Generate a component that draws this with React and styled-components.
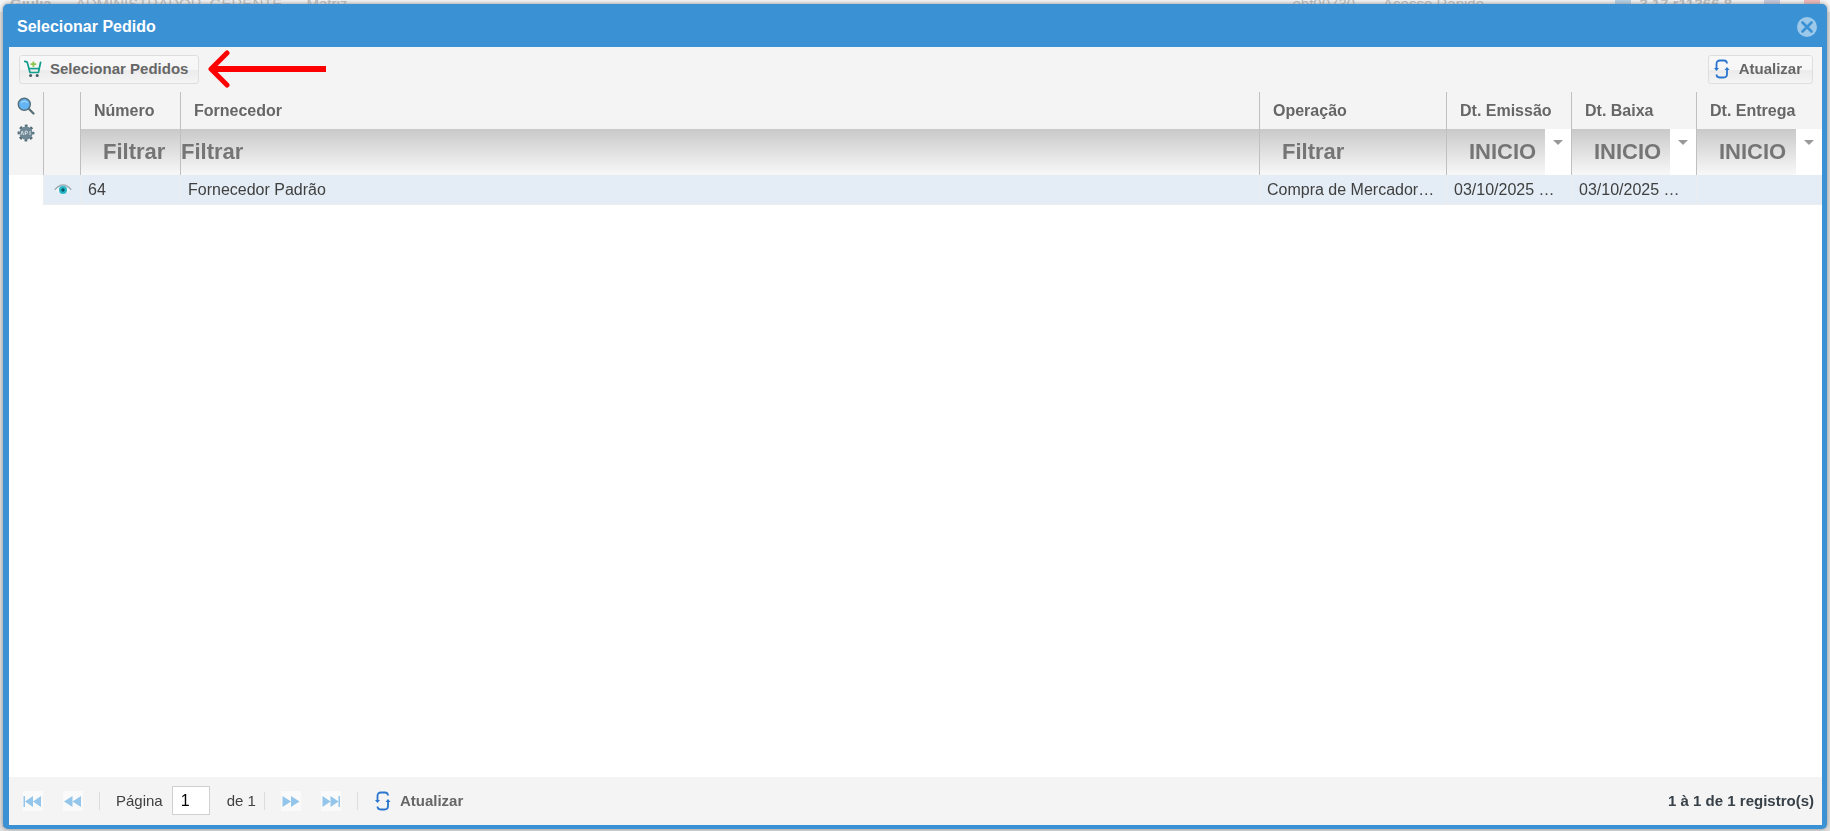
import React from "react";
import styled, {createGlobalStyle, css} from "styled-components";

const columns = [
    {id: "numero", label: "Número", width: 100, filter: "text"},
    {id: "fornecedor", label: "Fornecedor", filter: "text", flush: true},
    {id: "operacao", label: "Operação", width: 187, filter: "text"},
    {id: "emissao", label: "Dt. Emissão", width: 125, filter: "date"},
    {id: "baixa", label: "Dt. Baixa", width: 125, filter: "date"},
    {id: "entrega", label: "Dt. Entrega", width: 126, filter: "date"},
];

const orders = [
    {
        numero: "64",
        fornecedor: "Fornecedor Padrão",
        operacao: "Compra de Mercadorias",
        emissao: "03/10/2025 10:25",
        baixa: "03/10/2025 10:25",
        entrega: "",
    },
];

const CartIcon = () => (
    <svg width="18" height="18" viewBox="0 0 18 18" fill="none" aria-hidden="true">
        <path d="M0.8 1.4l2.4 0.7 2.8 10.4h8.4l2.2-10.2" stroke="#0f9d8c" strokeWidth="1.7" strokeLinecap="round" strokeLinejoin="round"/>
        <path d="M5 8.600h10" stroke="#0f9d8c" strokeWidth="1.6"/>
        <path d="M9.400 1.400v5.600M6.600 4.200h5.600" stroke="#8bc34a" strokeWidth="1.7"/>
        <circle cx="6.6" cy="15.4" r="1.5" fill="#455a64"/>
        <circle cx="13.2" cy="15.4" r="1.5" fill="#455a64"/>
    </svg>
);

const RefreshIcon = () => (
    <svg width="18" height="20" viewBox="-1 0 18 20" fill="none" aria-hidden="true">
        <path d="M2.500 9.500V5q0-3.500 3.500-3.500h4q2.800 0 3 3M13 10.500V15q0 3.500-3.500 3.500h-4q-2.800 0-3-3" stroke="#2a76cf" strokeWidth="1.800"/>
        <path d="M0 9h5l-2.500 3zM10.500 11h5L13 8z" fill="#2a76cf"/>
    </svg>
);

const SearchIcon = () => (
    <svg width="18" height="18" viewBox="0 0 18 18" aria-hidden="true">
        <path d="M12 12l4.500 4.500" stroke="#546e7a" strokeWidth="2.200" strokeLinecap="round"/>
        <circle cx="7.300" cy="7.300" r="6" fill="#64b5f6" stroke="#546e7a" strokeWidth="1.400"/>
        <path d="M4 5.600q3-3 6.500 0" stroke="#bbdefb" strokeWidth="1" fill="none"/>
    </svg>
);

const GearIcon = () => (
    <svg width="18" height="18" viewBox="0 0 18 18" aria-hidden="true">
        <circle cx="9" cy="9" r="6.600" fill="#6d8794"/>
        <circle cx="9" cy="9" r="7.300" fill="none" stroke="#546e7a" strokeWidth="2.200" strokeDasharray="2.800 2.933" strokeDashoffset="1.400"/>
        <path d="M3.800 11l1.400-4 1.400 4M8.200 11V7.200h1.200q1.200 0 1.200 1.100t-1.200 1.100H8.200M13 7v4" fill="none" stroke="#dfe6e9" strokeWidth="0.900"/>
    </svg>
);

const EyeIcon = () => (
    <svg width="18" height="14" viewBox="0 0 18 14" aria-hidden="true">
        <path d="M1 7q8-7 16 0-8 7-16 0" fill="#f3f7f9"/>
        <path d="M0.800 6.800q8.200-9.600 16.400 0" fill="none" stroke="#9eaeb6" strokeWidth="1.500"/>
        <circle cx="9" cy="7" r="4" fill="#26b6c6"/>
        <circle cx="9" cy="7" r="1.700" fill="#0b5566"/>
    </svg>
);

const CloseIcon = () => (
    <svg width="20" height="20" viewBox="0 0 20 20" aria-hidden="true">
        <circle cx="10" cy="10" r="10" fill="#9cc8e9"/>
        <path d="M5.500 5.500l9 9M14.500 5.500l-9 9" stroke="#3a91d4" strokeWidth="2.600" strokeLinecap="round"/>
    </svg>
);

const pagerShapes = {
    first: "M0.500 5h1.500v11H0.500zM10 5v11l-8-5.500zM18 5v11l-8-5.500z",
    prev: "M9.500 5v11l-8.500-5.500zM18 5v11l-8.500-5.500z",
    next: "M1.500 5v11l8.500-5.500zM10 5v11l8.500-5.500z",
    last: "M1.500 5v11l8-5.500zM9.500 5v11l8-5.500zM17.500 5H19v11h-1.500z",
};

const PagerIcon = ({shape}) => (
    <svg width="20" height="20" viewBox="0 0 20 20" aria-hidden="true">
        <path d={pagerShapes[shape]} fill="#93c6ea"/>
    </svg>
);

const PointerArrow = () => (
    <svg width="118" height="38" viewBox="0 0 118 38" fill="none" aria-hidden="true">
        <path d="M19 3L3 19l16 16" stroke="#f00" strokeWidth="5" strokeLinecap="round" strokeLinejoin="round"/>
        <path d="M3 19h115" stroke="#f00" strokeWidth="6"/>
    </svg>
);

const Filter = ({column}) => {
    if (column.filter === "date") {
        return (
            <FilterRow>
                <FilterInput placeholder="INICIO" aria-label={column.label}/>
                <DateButton type="button" aria-label={`Opções de ${column.label}`}>
                    <svg width="10" height="5" viewBox="0 0 10 5" aria-hidden="true">
                        <path d="M0 0h10L5 5z" fill="#999"/>
                    </svg>
                </DateButton>
            </FilterRow>
        );
    }
    return (
        <FilterRow>
            <FilterInput $flush={column.flush} placeholder="Filtrar" aria-label={column.label}/>
        </FilterRow>
    );
};

const App = () => {
    return (
        <>
            <GlobalStyle/>
            <Page>
                <PageBar>
                    <PageUser><b>Giulia</b><span>ADMINISTRADOR_GERENTE</span><span>Matriz</span></PageUser>
                    <PageInfo><span>ebf00730</span><span>Acesso Rápido</span></PageInfo>
                    <PageTools>
                        <Chip $color="#b5d3ea"/>
                        <Version>3.17.r11366.8</Version>
                        <Chip $color="#c9cbe0"/>
                        <Chip $color="#f3b9b9"/>
                    </PageTools>
                </PageBar>
                <PageFooter><b>Atualizar</b><span>Mostrar</span><span>100</span></PageFooter>
            </Page>
            <Dialog role="dialog" aria-labelledby="dialog-title">
                <TitleBar>
                    <Title id="dialog-title">Selecionar Pedido</Title>
                    <CloseButton type="button" aria-label="Fechar"><CloseIcon/></CloseButton>
                </TitleBar>
                <Toolbar>
                    <ToolButton type="button"><CartIcon/>Selecionar Pedidos</ToolButton>
                    <PointerArrow/>
                    <Spacer/>
                    <ToolButton type="button"><RefreshIcon/>Atualizar</ToolButton>
                </Toolbar>
                <Body>
                    <SideBar>
                        <IconButton type="button" aria-label="Pesquisar"><SearchIcon/></IconButton>
                        <IconButton type="button" aria-label="API"><GearIcon/></IconButton>
                    </SideBar>
                    <Grid>
                        <colgroup>
                            <Col $width={37}/>
                            {columns.map((column) => <Col key={column.id} $width={column.width}/>)}
                        </colgroup>
                        <thead>
                            <tr>
                                <HeadCell rowSpan={2} aria-label="Visualizar"/>
                                {columns.map((column) => (
                                    <HeadCell key={column.id}>{column.label}</HeadCell>
                                ))}
                            </tr>
                            <tr>
                                {columns.map((column) => (
                                    <FilterCell key={column.id}><Filter column={column}/></FilterCell>
                                ))}
                            </tr>
                        </thead>
                        <tbody>
                            {orders.map((order) => (
                                <tr key={order.numero}>
                                    <Cell $icon>
                                        <IconButton type="button" aria-label="Visualizar"><EyeIcon/></IconButton>
                                    </Cell>
                                    {columns.map((column) => (
                                        <Cell key={column.id}>{order[column.id]}</Cell>
                                    ))}
                                </tr>
                            ))}
                        </tbody>
                    </Grid>
                </Body>
                <Footer>
                    <PagerButton type="button" aria-label="Primeira página"><PagerIcon shape="first"/></PagerButton>
                    <PagerButton type="button" aria-label="Página anterior"><PagerIcon shape="prev"/></PagerButton>
                    <Divider/>
                    <PageLabel htmlFor="page">Página</PageLabel>
                    <PageInput id="page" defaultValue="1"/>
                    <PageCount>de 1</PageCount>
                    <Divider/>
                    <PagerButton type="button" aria-label="Próxima página"><PagerIcon shape="next"/></PagerButton>
                    <PagerButton type="button" aria-label="Última página"><PagerIcon shape="last"/></PagerButton>
                    <Divider/>
                    <FooterButton type="button"><RefreshIcon/>Atualizar</FooterButton>
                    <Spacer/>
                    <Total>1 à 1 de 1 registro(s)</Total>
                </Footer>
            </Dialog>
        </>
    );
};

const GlobalStyle = createGlobalStyle`
  * {
    box-sizing: border-box;
  }

  body {
    margin: 0;
    font-family: "Liberation Sans", Arial, sans-serif;
    font-size: 16px;
    color: #404040;
  }

  button,
  input {
    font-family: inherit;
  }

  svg {
    display: block;
    flex-shrink: 0;
  }
`;

/* page under the dialog */
const Page = styled.div`
  display: flex;
  flex-direction: column;
  justify-content: space-between;
  height: 100vh;
  overflow: hidden;
  background-color: #e2e2e2;
  font-size: 15px;
  color: #bdbdbd;
`;

const PageBar = styled.div`
  display: flex;
  height: 12px;
  padding: 0 10px;
  line-height: 8px;
  background-color: #f7f7f7;
`;

const PageUser = styled.div`
  display: flex;
  flex: 1;
  gap: 24px;
`;

const PageInfo = styled.div`
  display: flex;
  gap: 28px;
`;

const PageTools = styled.div`
  display: flex;
  justify-content: flex-end;
  gap: 24px;
  width: 336px;
`;

const Version = styled.b`
  margin: 0 8px 0 -16px;
`;

const Chip = styled.span`
  width: 16px;
  height: 8px;
  background-color: ${({$color}) => $color};
`;

const PageFooter = styled.div`
  display: flex;
  gap: 48px;
  height: 18px;
  padding: 0 2px;
  line-height: 18px;
`;

const Dialog = styled.section`
  position: fixed;
  inset: 4px 3px 2px;
  display: flex;
  flex-direction: column;
  border: solid #3a91d4;
  border-width: 0 5px 4px 6px;
  border-radius: 5px;
  background-color: #fff;
  box-shadow: 0 0 5px #888;
`;

const TitleBar = styled.header`
  display: flex;
  align-items: center;
  justify-content: space-between;
  height: 43px;
  padding: 3px 5px 0 8px;
  background-color: #3a91d4;
`;

const Title = styled.h1`
  margin: 0;
  font-size: 16px;
  line-height: 20px;
  color: #fff;
`;

const plainButton = css`
  display: flex;
  align-items: center;
  padding: 0;
  border: 0;
  background: none;
  cursor: pointer;
`;

const CloseButton = styled.button`
  ${plainButton}
`;

const Toolbar = styled.div`
  display: flex;
  align-items: center;
  gap: 9px;
  height: 45px;
  padding: 0 9px 1px 10px;
  background-color: #f4f4f4;
`;

const Spacer = styled.div`
  flex: 1;
`;

const ToolButton = styled.button`
  ${plainButton}
  gap: 8px;
  height: 29px;
  padding: 0 10px 1px 4px;
  border: 1px solid #dedede;
  border-radius: 3px;
  background: linear-gradient(#f8f8f8 0%, #f6f6f6 50%, #ebebeb 51%, #f4f4f4 100%);
  font-size: 15px;
  font-weight: bold;
  color: #666;
`;

const Body = styled.div`
  display: flex;
  flex: 1;
  align-items: flex-start;
  min-height: 0;
`;

const SideBar = styled.aside`
  display: flex;
  flex-direction: column;
  align-items: center;
  gap: 9px;
  width: 34px;
  height: 83px;
  padding-top: 5px;
  background-color: #f4f4f4;
`;

const IconButton = styled.button`
  ${plainButton}
`;

const Grid = styled.table`
  flex: 1;
  width: 100%;
  min-width: 0;
  table-layout: fixed;
  border-collapse: separate;
  border-spacing: 0;
`;

const Col = styled.col`
  width: ${({$width}) => ($width ? `${$width}px` : "auto")};
`;

const HeadCell = styled.th`
  height: 37px;
  padding: 0 0 0 13px;
  border-left: 1px solid #c0c0c0;
  background-color: #f4f4f4;
  text-align: left;
  white-space: nowrap;
  color: #666;
`;

const FilterCell = styled.td`
  height: 46px;
  padding: 0;
  border-left: 1px solid #c0c0c0;
`;

const FilterRow = styled.div`
  display: flex;
  height: 46px;
`;

const FilterInput = styled.input`
  flex: 1;
  min-width: 0;
  padding: 0 0 0 ${({$flush}) => ($flush ? 0 : 22)}px;
  border: 0;
  background: linear-gradient(#c9c9c9, #f8f8f8);
  font-size: 22px;
  font-weight: bold;

  &::placeholder {
    color: #757575;
  }
`;

const DateButton = styled.button`
  ${plainButton}
  align-items: flex-start;
  justify-content: center;
  width: 26px;
  padding-top: 11px;
`;

const Cell = styled.td`
  height: 30px;
  padding: 0 ${({$icon}) => ($icon ? 0 : 10)}px 0 ${({$icon}) => ($icon ? 10 : 7)}px;
  border-left: 1px solid #ededed;
  border-bottom: 1px solid #ededed;
  background-color: #e4edf5;
  overflow: hidden;
  text-overflow: ellipsis;
  white-space: nowrap;
`;

const Footer = styled.footer`
  display: flex;
  align-items: center;
  height: 48px;
  padding: 0 8px 1px 14px;
  background-color: #f4f4f4;
  font-size: 15px;
`;

const PagerButton = styled.button`
  ${plainButton}
  background-color: #fafafa;

  & + & {
    margin-left: 20px;
  }
`;

const Divider = styled.span`
  width: 1px;
  height: 18px;
  margin: 0 16px;
  background-color: #ddd;
`;

const PageLabel = styled.label`
  margin-right: 9px;
`;

const PageInput = styled.input`
  width: 38px;
  height: 29px;
  padding: 0 8px;
  border: 1px solid #d0d0d0;
  background-color: #fff;
  font-size: 16px;
`;

const PageCount = styled.span`
  margin-left: 17px;
  margin-right: -8px;
`;

const FooterButton = styled.button`
  ${plainButton}
  gap: 8px;
  font-size: 15px;
  font-weight: bold;
  color: #666;
`;

const Total = styled.strong`
  color: #384048;
`;

export default App;
